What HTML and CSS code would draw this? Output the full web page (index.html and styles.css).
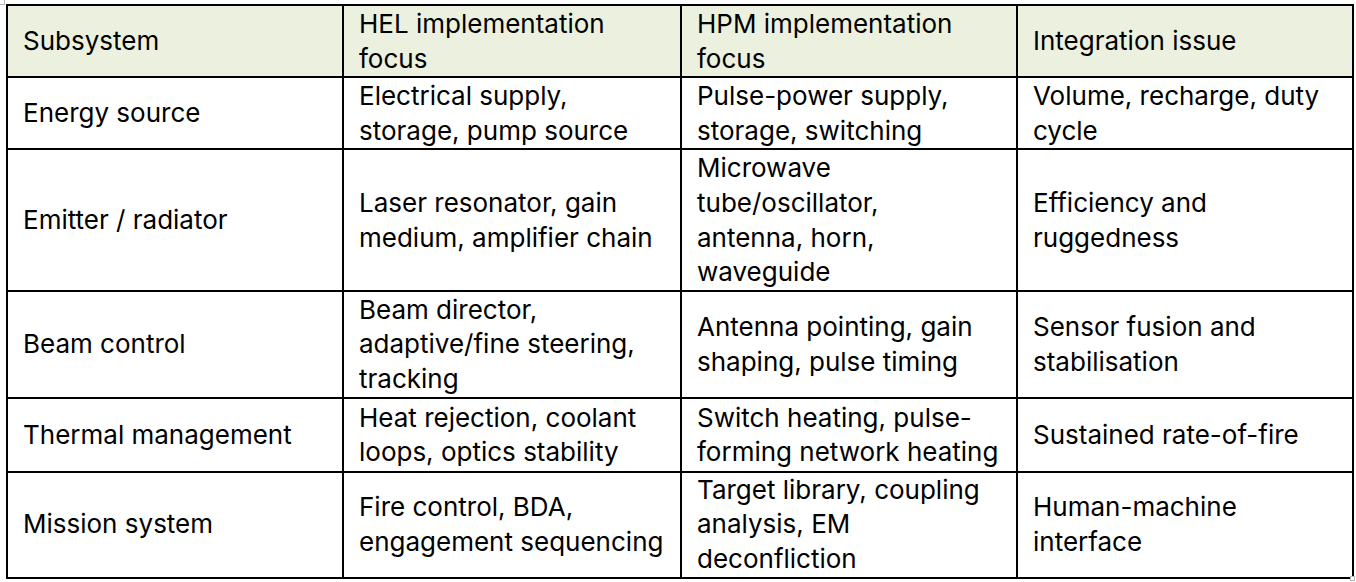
FILE: index.html
```html
<!DOCTYPE html>
<html lang="en">
<head>
<meta charset="utf-8">
<title>Subsystems</title>
<link rel="stylesheet" href="styles.css">
</head>
<body>
<div class="sheet">
  <span class="handle handle-tl"></span>
  <table class="grid">
    <colgroup>
      <col class="c1"><col class="c2"><col class="c3"><col class="c4">
    </colgroup>
    <thead>
      <tr class="head">
        <th>Subsystem</th>
        <th>HEL implementation<br>focus</th>
        <th>HPM implementation<br>focus</th>
        <th>Integration issue</th>
      </tr>
    </thead>
    <tbody>
      <tr>
        <td>Energy source</td>
        <td>Electrical supply,<br>storage, pump source</td>
        <td>Pulse-power supply,<br>storage, switching</td>
        <td>Volume, recharge, duty<br>cycle</td>
      </tr>
      <tr>
        <td>Emitter / radiator</td>
        <td>Laser resonator, gain<br>medium, amplifier chain</td>
        <td>Microwave<br>tube/oscillator,<br>antenna, horn,<br>waveguide</td>
        <td>Efficiency and<br>ruggedness</td>
      </tr>
      <tr>
        <td>Beam control</td>
        <td>Beam director,<br>adaptive/fine steering,<br>tracking</td>
        <td>Antenna pointing, gain<br>shaping, pulse timing</td>
        <td>Sensor fusion and<br>stabilisation</td>
      </tr>
      <tr class="row-roomy">
        <td>Thermal management</td>
        <td>Heat rejection, coolant<br>loops, optics stability</td>
        <td>Switch heating, pulse-<br>forming network heating</td>
        <td>Sustained rate-of-fire</td>
      </tr>
      <tr class="row-tight">
        <td>Mission system</td>
        <td>Fire control, BDA,<br>engagement sequencing</td>
        <td>Target library, coupling<br>analysis, EM<br>deconfliction</td>
        <td>Human-machine<br>interface</td>
      </tr>
    </tbody>
  </table>
  <span class="handle handle-br"></span>
</div>
</body>
</html>
```
FILE: styles.css
```css
html, body {
  margin: 0;
  padding: 0;
  background: #ffffff;
}

.sheet {
  position: relative;
  width: 1356px;
  height: 582px;
  padding: 4px 0 0 6px;
  box-sizing: border-box;
}

.grid {
  border-collapse: collapse;
  table-layout: fixed;
  width: 1346px;
  font-family: "Inter", "Noto Sans", sans-serif;
  font-size: 26px;
  line-height: 34.6px;
  color: #000000;
}

.c1 { width: 336px; }
.c2 { width: 338px; }
.c3 { width: 336px; }
.c4 { width: 336px; }

.grid th,
.grid td {
  border: 2px solid #000000;
  padding: 1px 12px 0 15px;
  text-align: left;
  vertical-align: middle;
  font-weight: 400;
  white-space: nowrap;
}

.grid .row-roomy td {
  padding-top: 2px;
  padding-bottom: 1px;
}

.grid .row-tight td {
  padding-top: 0;
  padding-bottom: 0;
}

.head th {
  background: #ebf1de;
}

.handle {
  position: absolute;
  width: 6px;
  height: 6px;
  border: 1px solid #b8b8b8;
  background: #ffffff;
  box-sizing: border-box;
}

.handle-tl {
  left: -1px;
  top: -1px;
}

.handle-br {
  left: 1350px;
  top: 576px;
  width: 5px;
  height: 5px;
}
```
